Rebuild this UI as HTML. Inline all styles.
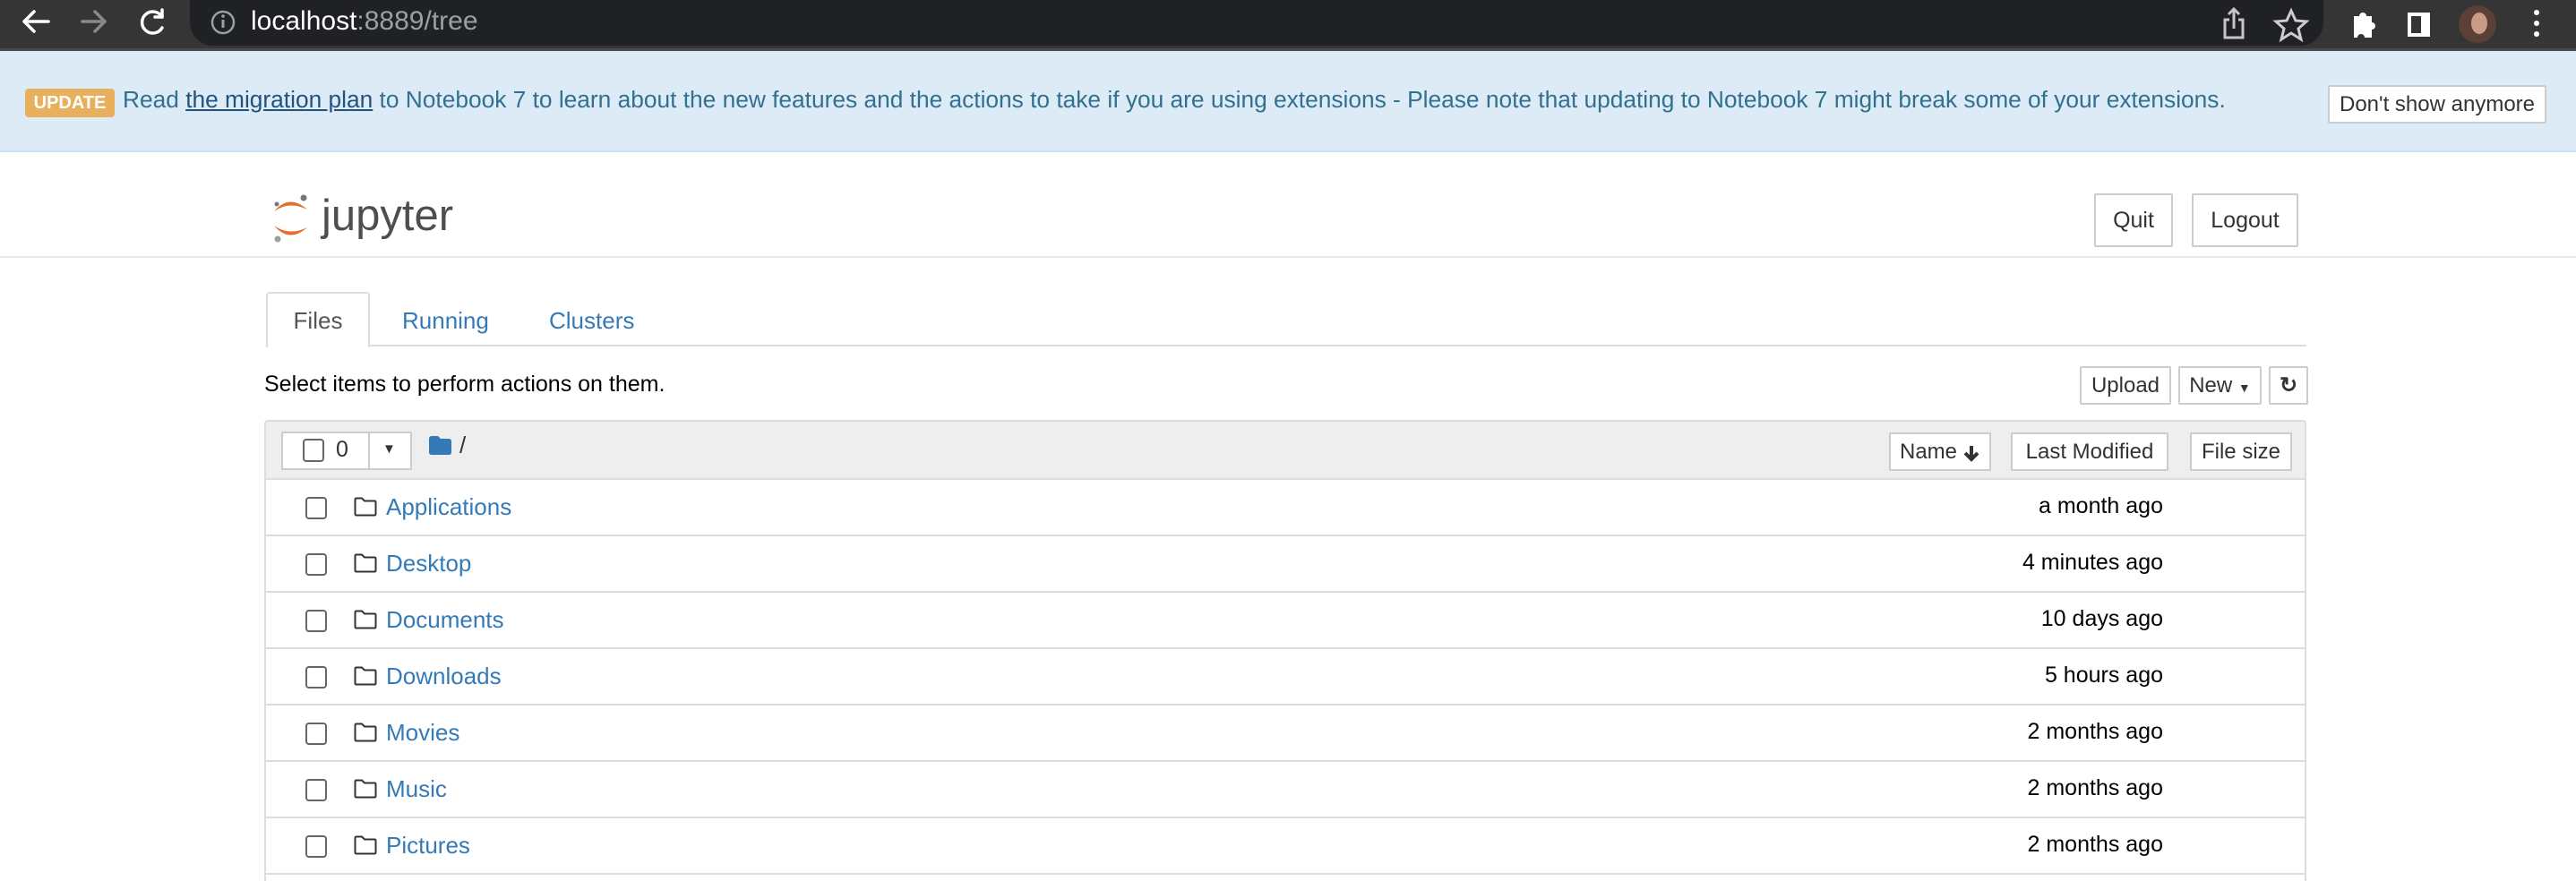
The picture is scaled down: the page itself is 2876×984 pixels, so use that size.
<!DOCTYPE html>
<html><head><meta charset="utf-8"><style>
*{box-sizing:border-box;margin:0;padding:0}
html,body{width:2876px;height:984px;overflow:hidden}
body{background:#fff;font-family:"Liberation Sans",Arial,sans-serif;position:relative;color:#000}
.abs{position:absolute}
.chrome{left:0;top:0;width:2876px;height:54px;background:#353535}
.chrome2{left:0;top:54px;width:2876px;height:3px;background:#4a4a4a}
.pill{left:212px;top:0;width:2382px;height:51px;background:#202124;border-radius:0 26px 26px 26px;border-top-right-radius:0}
.url{left:280px;top:7px;font-size:30px;color:#fff}
.url span{color:#9aa0a6}
.banner{left:0;top:57px;width:2876px;height:113px;background:#dcebf6;border-bottom:2px solid #c6e3ee}
.badge{left:28px;top:99px;width:100px;height:32px;background:#e8b05c;border-radius:4px;color:#fff;font-weight:bold;font-size:20px;line-height:32px;text-align:center}
.btxt{left:137px;top:96px;font-size:26.3px;color:#31708f;white-space:nowrap}
.btxt u{color:#23527c}
.btn{border:2px solid #ccc;background:#fff;color:#333;text-align:center;font-size:24px;border-radius:2px}
.hdrline{left:0;top:286px;width:2876px;height:2px;background:#e7e7e7}
.tab{color:#337ab7;font-size:26px}
.row{left:295px;width:2280px;height:63px;border-bottom:2px solid #ddd;border-left:2px solid #ddd;border-right:2px solid #ddd}
.cb{position:absolute;left:44px;top:19px;width:24px;height:25px;border:2px solid #666;border-radius:4px}
.name{position:absolute;left:134px;top:15px;font-size:26px;color:#337ab7}
.date{position:absolute;right:158px;top:15px;font-size:25px;color:#000}
.fold{position:absolute;left:98px;top:19px}
</style></head><body>
<div class="abs chrome"></div>
<div class="abs chrome2"></div>
<div class="abs pill"></div>
<svg class="abs" style="left:0;top:0" width="220" height="54">
<g fill="none" stroke-width="3.5" stroke-linecap="round" stroke-linejoin="round">
<path d="M54 24 H28 M38 13 L27 24 L38 35" stroke="#fff"/>
<path d="M92 24 H117 M106 13 L117 24 L106 35" stroke="#8a8a8a"/>
<path d="M181 19 A12 12 0 1 0 181 31" stroke="#fff"/>
<path d="M181 11 V19 H173" stroke="#fff"/>
</g></svg>
<svg class="abs" style="left:234px;top:10px" width="30" height="30"><circle cx="15" cy="15" r="12" fill="none" stroke="#9aa0a6" stroke-width="2.5"/><rect x="13.5" y="12" width="3" height="9" fill="#9aa0a6"/><circle cx="15" cy="8" r="1.8" fill="#9aa0a6"/></svg>
<div class="abs url">localhost<span>:8889/tree</span></div>
<svg class="abs" style="left:2480px;top:6px" width="396" height="44" viewBox="0 0 396 44">
<g fill="none" stroke="#c6c6c6" stroke-width="3"><path d="M9 16 H4 V36 H24 V16 H19 M14 26 V4 M8 10 L14 4 L20 10"/>
<path d="M78 6 L83 17 L95 18 L86 26 L89 38 L78 31 L67 38 L70 26 L61 18 L73 17 Z" stroke="#ccc"/></g>
<path d="M148 12 h6 a4 4 0 0 1 8 0 h6 v7 a4 4 0 0 1 0 8 v9 h-8 a4 4 0 0 0 -8 0 h-4 z" fill="#fff"/>
<rect x="208" y="8" width="25" height="27" fill="#fff"/><rect x="212" y="12" width="11" height="19" fill="#353535"/>
<circle cx="286" cy="21" r="21" fill="#5b4038"/><ellipse cx="288" cy="20" rx="9" ry="12" fill="#c99c86"/>
<circle cx="352" cy="8" r="3" fill="#fff"/><circle cx="352" cy="20" r="3" fill="#fff"/><circle cx="352" cy="32" r="3" fill="#fff"/></svg>

<div class="abs banner"></div>
<div class="abs badge">UPDATE</div>
<div class="abs btxt">Read <u>the migration plan</u> to Notebook 7 to learn about the new features and the actions to take if you are using extensions - Please note that updating to Notebook 7 might break some of your extensions.</div>
<div class="abs btn" style="left:2599px;top:95px;width:244px;height:43px;line-height:39px;font-size:24px">Don't show anymore</div>

<svg class="abs" style="left:303px;top:216px" width="46" height="56" viewBox="0 0 46 56">
<path d="M3 20 Q20 0 40 18 Q20 8 3 20Z" fill="#e46e2e"/>
<path d="M3 36 Q20 56 40 38 Q20 48 3 36Z" fill="#e46e2e"/>
<circle cx="36" cy="5" r="3.5" fill="#767677"/><circle cx="6" cy="12" r="2.5" fill="#767677"/><circle cx="7" cy="51" r="3.5" fill="#9e9e9e"/>
</svg>
<div class="abs" style="left:359px;top:213px;font-size:49px;color:#4e4e4e">jupyter</div>
<div class="abs btn" style="left:2338px;top:216px;width:88px;height:60px;line-height:56px;font-size:25px">Quit</div>
<div class="abs btn" style="left:2447px;top:216px;width:119px;height:60px;line-height:56px;font-size:25px">Logout</div>
<div class="abs hdrline"></div>

<div class="abs" style="left:297px;top:326px;width:116px;height:62px;border:2px solid #ddd;border-bottom:none;background:#fff;border-radius:4px 4px 0 0;z-index:2;font-size:26px;color:#555;text-align:center;line-height:60px">Files</div>
<div class="abs" style="left:297px;top:385px;width:2278px;height:2px;background:#ddd"></div>
<div class="abs tab" style="left:449px;top:343px">Running</div>
<div class="abs tab" style="left:613px;top:343px">Clusters</div>
<div class="abs" style="left:295px;top:415px;font-size:25px">Select items to perform actions on them.</div>
<div class="abs btn" style="left:2322px;top:409px;width:102px;height:43px;line-height:39px">Upload</div>
<div class="abs btn" style="left:2432px;top:409px;width:93px;height:43px;line-height:39px">New <span style="font-size:14px">&#9660;</span></div>
<div class="abs btn" style="left:2533px;top:409px;width:44px;height:43px;line-height:39px;font-weight:bold">&#8635;</div>

<div class="abs" style="left:295px;top:469px;width:2280px;height:67px;background:#eee;border:2px solid #ddd;border-radius:4px 4px 0 0"></div>
<div class="abs btn" style="left:314px;top:482px;width:146px;height:43px"></div>
<div class="abs" style="left:411px;top:484px;width:2px;height:39px;background:#ccc"></div>
<div class="abs" style="left:338px;top:490px;width:24px;height:26px;border:2px solid #666;border-radius:4px;background:#fff"></div>
<div class="abs" style="left:375px;top:488px;font-size:25px;color:#333">0</div>
<div class="abs" style="left:427px;top:493px;font-size:15px;color:#333">&#9660;</div>
<svg class="abs" style="left:479px;top:487px" width="25" height="21"><path d="M0 3 Q0 0 3 0 H10 L13 3 H22 Q25 3 25 6 V18 Q25 21 22 21 H3 Q0 21 0 18Z" fill="#337ab7"/></svg>
<div class="abs" style="left:513px;top:482px;font-size:26px;color:#333">/</div>
<div class="abs btn" style="left:2109px;top:483px;width:114px;height:43px;line-height:39px;text-align:left;padding-left:10px">Name<svg style="position:absolute;left:80px;top:11px" width="20" height="20"><path d="M10 2 V16 M3 10 L10 17 L17 10" fill="none" stroke="#333" stroke-width="4"/></svg></div>
<div class="abs btn" style="left:2245px;top:483px;width:176px;height:43px;line-height:39px">Last Modified</div>
<div class="abs btn" style="left:2445px;top:483px;width:114px;height:43px;line-height:39px">File size</div>

<div class="abs row" style="top:536px"><div class="cb"></div><svg class="fold" width="26" height="22"><path d="M1.5 3 Q1.5 1.5 3 1.5 H9 L12 4.5 H23 Q24.5 4.5 24.5 6 V19 Q24.5 20.5 23 20.5 H3 Q1.5 20.5 1.5 19Z" fill="none" stroke="#333" stroke-width="2"/></svg><div class="name">Applications</div><div class="date">a month ago</div></div>
<div class="abs row" style="top:599px"><div class="cb"></div><svg class="fold" width="26" height="22"><path d="M1.5 3 Q1.5 1.5 3 1.5 H9 L12 4.5 H23 Q24.5 4.5 24.5 6 V19 Q24.5 20.5 23 20.5 H3 Q1.5 20.5 1.5 19Z" fill="none" stroke="#333" stroke-width="2"/></svg><div class="name">Desktop</div><div class="date">4 minutes ago</div></div>
<div class="abs row" style="top:662px"><div class="cb"></div><svg class="fold" width="26" height="22"><path d="M1.5 3 Q1.5 1.5 3 1.5 H9 L12 4.5 H23 Q24.5 4.5 24.5 6 V19 Q24.5 20.5 23 20.5 H3 Q1.5 20.5 1.5 19Z" fill="none" stroke="#333" stroke-width="2"/></svg><div class="name">Documents</div><div class="date">10 days ago</div></div>
<div class="abs row" style="top:725px"><div class="cb"></div><svg class="fold" width="26" height="22"><path d="M1.5 3 Q1.5 1.5 3 1.5 H9 L12 4.5 H23 Q24.5 4.5 24.5 6 V19 Q24.5 20.5 23 20.5 H3 Q1.5 20.5 1.5 19Z" fill="none" stroke="#333" stroke-width="2"/></svg><div class="name">Downloads</div><div class="date">5 hours ago</div></div>
<div class="abs row" style="top:788px"><div class="cb"></div><svg class="fold" width="26" height="22"><path d="M1.5 3 Q1.5 1.5 3 1.5 H9 L12 4.5 H23 Q24.5 4.5 24.5 6 V19 Q24.5 20.5 23 20.5 H3 Q1.5 20.5 1.5 19Z" fill="none" stroke="#333" stroke-width="2"/></svg><div class="name">Movies</div><div class="date">2 months ago</div></div>
<div class="abs row" style="top:851px"><div class="cb"></div><svg class="fold" width="26" height="22"><path d="M1.5 3 Q1.5 1.5 3 1.5 H9 L12 4.5 H23 Q24.5 4.5 24.5 6 V19 Q24.5 20.5 23 20.5 H3 Q1.5 20.5 1.5 19Z" fill="none" stroke="#333" stroke-width="2"/></svg><div class="name">Music</div><div class="date">2 months ago</div></div>
<div class="abs row" style="top:914px"><div class="cb"></div><svg class="fold" width="26" height="22"><path d="M1.5 3 Q1.5 1.5 3 1.5 H9 L12 4.5 H23 Q24.5 4.5 24.5 6 V19 Q24.5 20.5 23 20.5 H3 Q1.5 20.5 1.5 19Z" fill="none" stroke="#333" stroke-width="2"/></svg><div class="name">Pictures</div><div class="date">2 months ago</div></div>
<div class="abs row" style="top:977px;height:7px;border-bottom:none"></div>
</body></html>
